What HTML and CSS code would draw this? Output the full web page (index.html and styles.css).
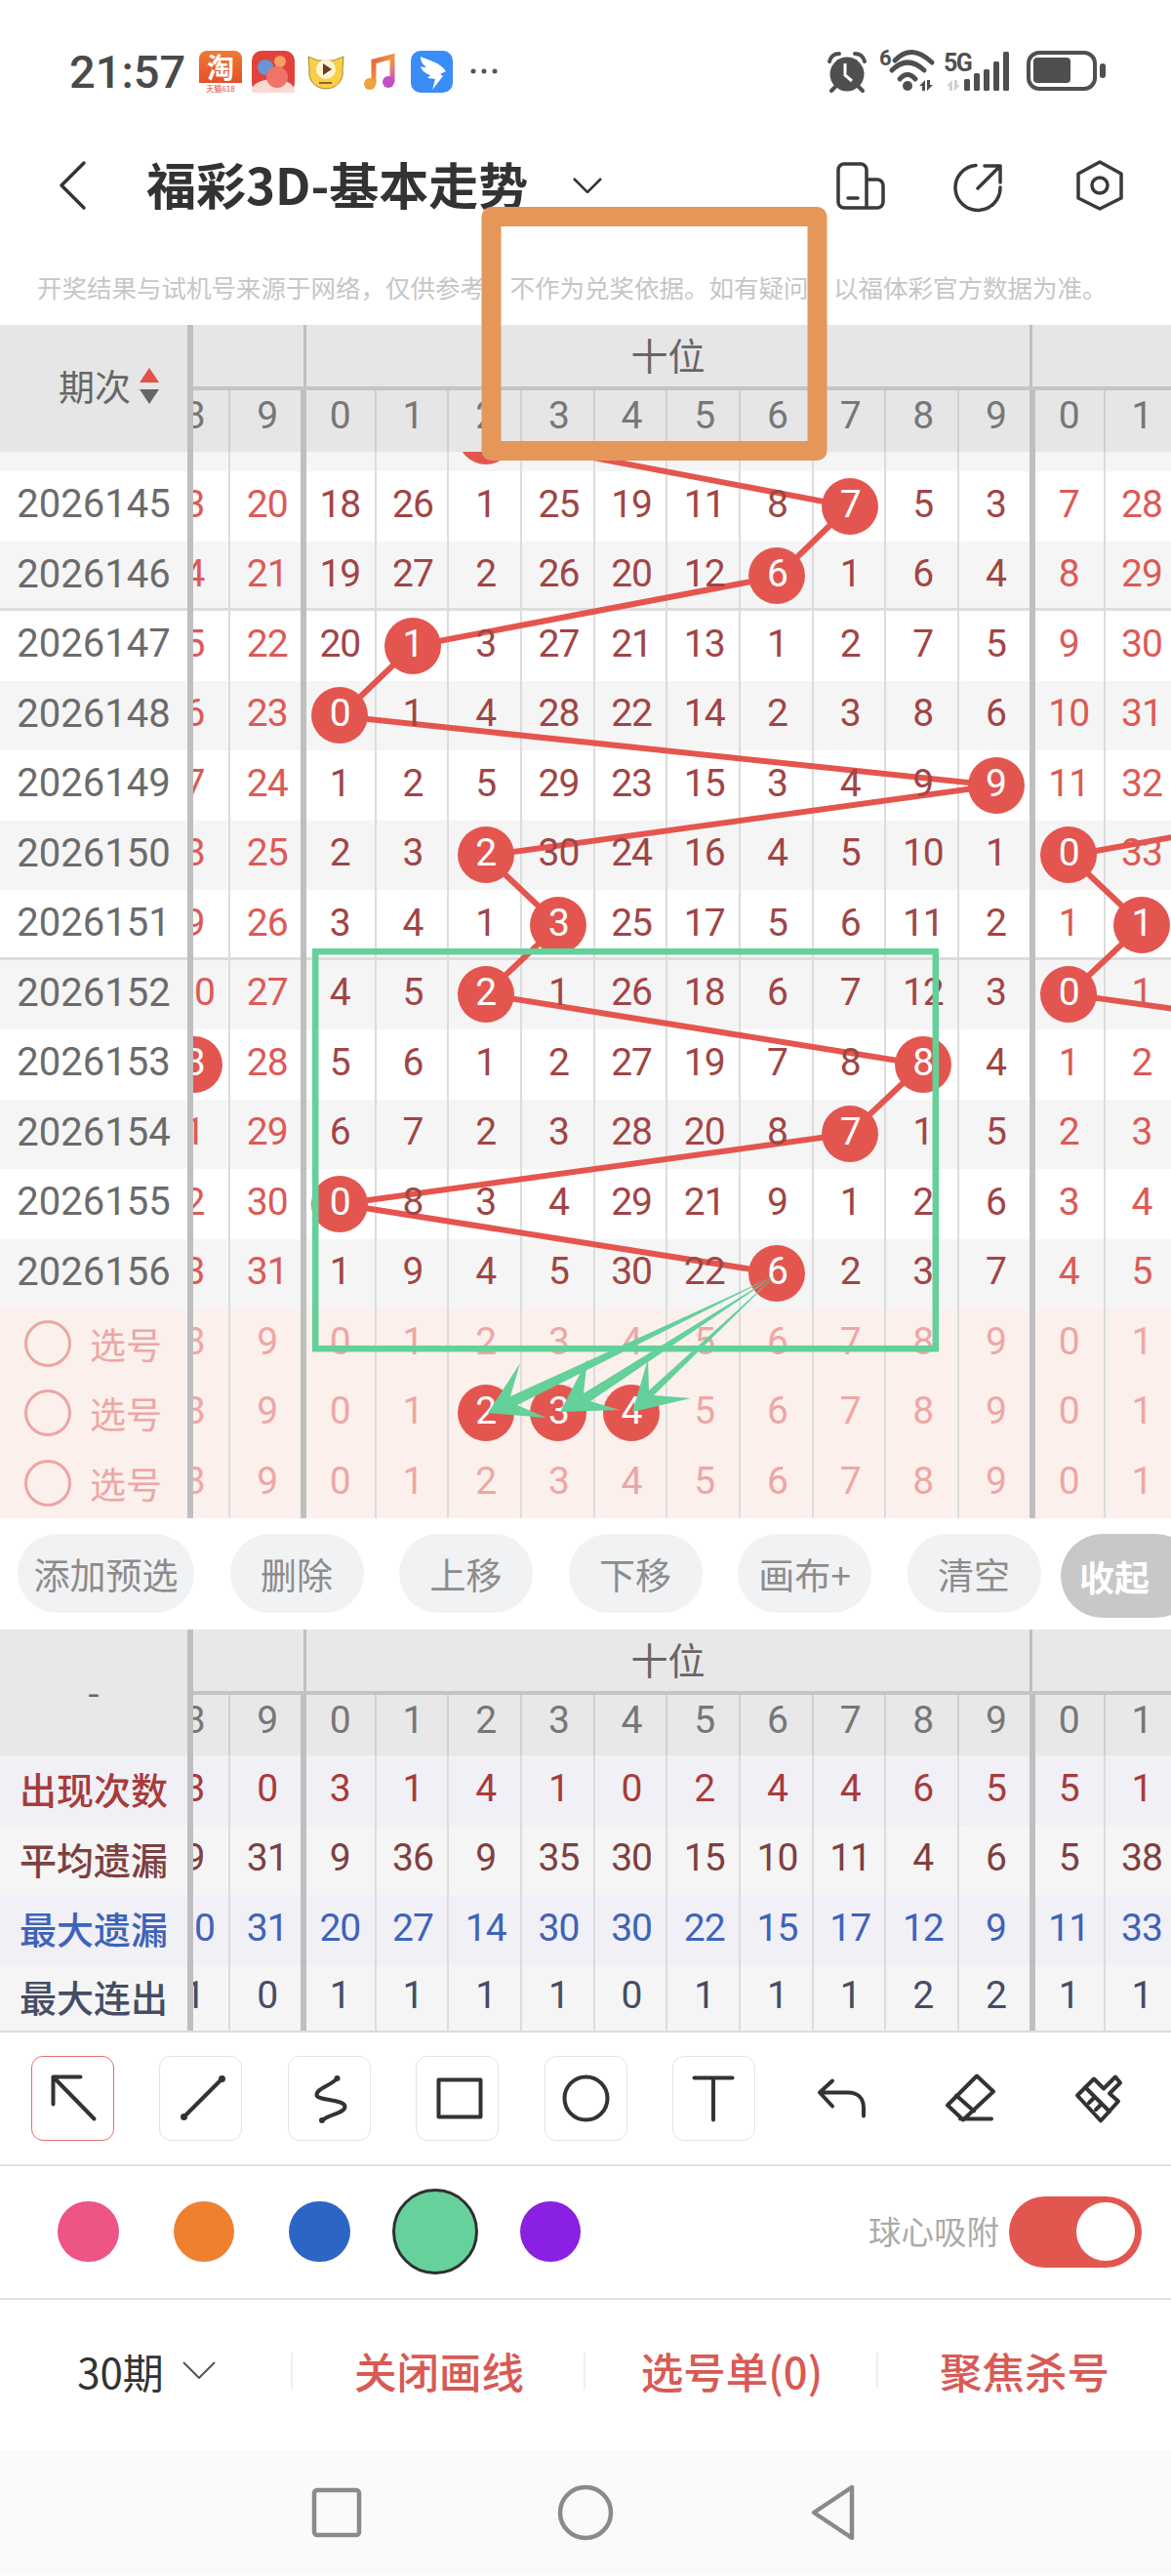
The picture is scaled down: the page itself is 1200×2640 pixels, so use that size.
FILE: index.html
```html
<!DOCTYPE html>
<html lang="zh-CN">
<head>
    <meta charset="UTF-8">
    <meta name="viewport" content="width=device-width, initial-scale=1.0">
    <title>福彩3D-基本走势</title>
    <link rel="stylesheet" href="styles.css">
</head>
<body>
<div class="page">

    <!-- status bar -->
    <div class="status-bar">
        <span class="clock">21:57</span>
        <svg class="app-icon" viewBox="0 0 54 44">
            <defs>
                <linearGradient id="tao" x1="0" y1="0" x2="0" y2="1">
                    <stop offset="0" stop-color="#ee7a33"/>
                    <stop offset="1" stop-color="#e5502a"/>
                </linearGradient>
            </defs>
            <path d="M5 34V9a8 8 0 0 1 8-8h28a8 8 0 0 1 8 8v25z" fill="url(#tao)"/>
            <text class="app-text tao-big" x="27" y="29" text-anchor="middle">淘</text>
            <text class="app-text tao-small" x="27" y="43" text-anchor="middle">天猫618</text>
        </svg>
        <svg class="app-icon" viewBox="0 0 54 44">
            <rect x="5" y="1" width="44" height="43" rx="10" fill="#e2423c"/>
            <ellipse cx="27" cy="42" rx="22" ry="12" fill="#fbdad6"/>
            <circle cx="19" cy="18" r="8" fill="#6a94d8"/>
            <circle cx="34" cy="12" r="6" fill="#f3a35e"/>
            <circle cx="31" cy="28" r="11" fill="#ef7468"/>
        </svg>
        <svg class="app-icon" viewBox="0 0 54 44">
            <path d="M9 7l10 4h16l10-4-1 13c2 12-7 20-17 20S8 32 10 20z" fill="#f7cf49" stroke="#a7873a" stroke-width="1"/>
            <circle cx="27" cy="20" r="10" fill="#fff6d0"/>
            <path d="M24 14l9 6-9 6z" fill="#6a3d22"/>
            <path d="M20 34h13" stroke="#8a6a2a" stroke-width="2"/>
        </svg>
        <svg class="app-icon" viewBox="0 0 54 44">
            <defs>
                <linearGradient id="note" x1="0" y1="0" x2="1" y2="1">
                    <stop offset="0" stop-color="#e8603f"/>
                    <stop offset=".55" stop-color="#ef9a3f"/>
                    <stop offset="1" stop-color="#c64fc4"/>
                </linearGradient>
            </defs>
            <path d="M22 35V12l19-5v26" fill="none" stroke="url(#note)" stroke-width="5"/>
            <circle cx="18" cy="35" r="6" fill="#f1a13e"/>
            <circle cx="37" cy="33" r="6" fill="#c64fc4"/>
        </svg>
        <svg class="app-icon" viewBox="0 0 54 44">
            <rect x="6" y="1" width="43" height="43" rx="10" fill="#3a8cf6"/>
            <path d="M16 7c9 4 20 6 26 15l-6 3 3 2-11 14 3-11-8-1 3-3c-6-2-9-5-10-9 2 1 4 1 6 1-4-3-6-6-6-11z" fill="#fff"/>
        </svg>
        <svg class="app-icon" viewBox="0 0 54 44">
            <circle cx="16" cy="22" r="2.5" fill="#555"/>
            <circle cx="27" cy="22" r="2.5" fill="#555"/>
            <circle cx="38" cy="22" r="2.5" fill="#555"/>
        </svg>

        <svg class="status-right" viewBox="845 45 290 56">
            <g fill="none" stroke="#4f4f4f" stroke-linecap="round">
                <path d="M850 63q2-8 10-8M886 63q-2-8-10-8" stroke-width="4"/>
                <path d="M856 89l-4 4M880 89l4 4" stroke-width="4"/>
                <path d="M917 62q17-18 38 2M914 72q16-16 33 0M922 81q8-9 16 0" stroke-width="5"/>
            </g>
            <circle cx="868" cy="76" r="17.5" fill="#4f4f4f"/>
            <path d="M866 65v12l7 6" fill="none" stroke="#fff" stroke-width="3"/>
            <text class="status-text" x="901" y="67">6</text>
            <circle cx="930" cy="88" r="5" fill="#4f4f4f"/>
            <path d="M942 88l6-6v11h-3v-5zM950 82h3v5h3l-6 6z" fill="#4f4f4f"/>
            <text class="status-text status-5g" x="967" y="73">5G</text>
            <path d="M970 88l6-6v11h-3v-5zM978 82h3v5h3l-6 6z" fill="#cfcfcf"/>
            <g fill="#4f4f4f">
                <rect x="988" y="81" width="6" height="12" rx="1.5"/>
                <rect x="998" y="75" width="6" height="18" rx="1.5"/>
                <rect x="1008" y="71" width="6" height="22" rx="1.5"/>
                <rect x="1018" y="63" width="6" height="30" rx="1.5"/>
                <rect x="1028" y="53" width="6" height="40" rx="1.5"/>
                <rect x="1059" y="59" width="38" height="26" rx="4"/>
                <rect x="1127" y="65" width="6" height="15" rx="3"/>
            </g>
            <rect x="1054" y="54" width="68" height="37" rx="11" fill="none" stroke="#4f4f4f" stroke-width="4"/>
        </svg>
    </div>

    <!-- title bar -->
    <div class="title-bar">
        <svg class="back" viewBox="0 0 32 52">
            <path d="M28 3L5 26l23 23" fill="none" stroke="#333" stroke-width="3.5" stroke-linecap="round" stroke-linejoin="round"/>
        </svg>
        <h1>福彩3D-基本走势</h1>
        <svg class="title-arrow" viewBox="0 0 32 16">
            <path d="M2 1l14 14L30 1" fill="none" stroke="#333" stroke-width="2.5"/>
        </svg>
        <div class="title-actions">
            <svg viewBox="0 0 56 56" class="action-icon">
                <path d="M11 6h17a6 6 0 0 1 6 6v39H11a6 6 0 0 1-6-6V12a6 6 0 0 1 6-6zM34 22h11a6 6 0 0 1 6 6v17a6 6 0 0 1-6 6H34M15 41h10"/>
            </svg>
            <svg viewBox="0 0 56 56" class="action-icon">
                <path d="M24 7.500A23 23 0 1 0 49 30M26 31L49 8M33 8h16v17"/>
            </svg>
            <svg viewBox="0 0 56 56" class="action-icon">
                <path d="M29 4l22 12v25L29 52 7 41V16z"/>
                <circle cx="29" cy="28" r="8"/>
            </svg>
        </div>
    </div>

    <p class="notice">开奖结果与试机号来源于网络，仅供参考，不作为兑奖依据。如有疑问，以福体彩官方数据为准。</p>

    <!-- trend table -->
    <div class="table-head">
        <div class="corner corner-sort">
            <span>期次</span>
            <span class="sort">
                <i class="sort-up"></i>
                <i class="sort-down"></i>
            </span>
        </div>
        <div class="head-scroll">
            <div class="head-inner">
                <div class="groups">
                    <div class="group g-hundreds"></div>
                    <div class="group g-tens">十位</div>
                    <div class="group g-ones"></div>
                </div>
                <div class="cells head-digits" data-line="8 9 0 1 2 3 4 5 6 7 8 9 0 1"></div>
            </div>
        </div>
    </div>

    <div class="table-body">
        <div class="frozen" id="frozen"></div>
        <div class="scroll">
            <div class="scroll-inner" id="rows">
                <!-- coordinates are page pixels, the viewBox lines them up with the rows -->
                <svg class="trend-lines" viewBox="161.600 463 1046 1093">
                    <polyline points="497,448 870,519 796,591 423,662 348,734 1020,805 497,877 572,948 497,1019 945,1091 870,1162 348,1234 796,1305"/>
                    <polyline points="1240,851 1095,877 1170,948 1095,1019 1240,1039"/>
                </svg>
            </div>
        </div>
    </div>

    <!-- action buttons -->
    <div class="actions">
        <button class="pill pill-wide">添加预选</button>
        <button class="pill">删除</button>
        <button class="pill">上移</button>
        <button class="pill">下移</button>
        <button class="pill">画布+</button>
        <button class="pill">清空</button>
        <button class="pill pill-fold">收起</button>
    </div>

    <!-- stats table -->
    <div class="table-head stats-head">
        <div class="corner">-</div>
        <div class="head-scroll">
            <div class="head-inner">
                <div class="groups">
                    <div class="group g-hundreds"></div>
                    <div class="group g-tens">十位</div>
                    <div class="group g-ones"></div>
                </div>
                <div class="cells head-digits" data-line="8 9 0 1 2 3 4 5 6 7 8 9 0 1"></div>
            </div>
        </div>
    </div>
    <div class="stats-body">
        <div class="frozen" id="stats-frozen"></div>
        <div class="scroll">
            <div class="scroll-inner stats-inner" id="stats-rows"></div>
        </div>
    </div>

    <!-- drawing tools -->
    <div class="tools">
        <button class="tool tool-on">
            <svg viewBox="0 0 60 60"><path d="M37.500 8.500h-28v28M9.500 8.500l42 43"/></svg>
        </button>
        <button class="tool">
            <svg viewBox="0 0 60 60"><path d="M51.500 10.500l-39 39"/><circle class="dot" cx="51.500" cy="10.500" r="3.500"/><circle class="dot" cx="12.500" cy="49.500" r="3.500"/></svg>
        </button>
        <button class="tool">
            <svg viewBox="0 0 60 60"><path d="M38.500 10c-7 8-21 10-21 17 0 6 29 4 29 12 0 7-18 8-23 14"/><circle class="dot" cx="38.500" cy="10" r="3"/><circle class="dot" cx="23" cy="53" r="3"/></svg>
        </button>
        <button class="tool">
            <svg viewBox="0 0 60 60"><rect x="10.500" y="11.500" width="43" height="38"/></svg>
        </button>
        <button class="tool">
            <svg viewBox="0 0 60 60"><circle cx="30.500" cy="30.500" r="22"/></svg>
        </button>
        <button class="tool">
            <svg viewBox="0 0 60 60"><path d="M10.500 9.500h39M30 9.500v43"/></svg>
        </button>
        <div class="tool-plain">
            <svg viewBox="0 0 60 60"><path d="M21 12.500L8 24.500l13 14M8 24.500h29c10 0 16 6 16 16v8"/></svg>
            <svg viewBox="0 0 60 60"><path d="M37 7.500l17 16-31 29-16-15zM16 27.500l18 16M20 51.500h32"/></svg>
            <svg viewBox="0 0 60 60"><path d="M25 10.500l10 10 12-12 5 6-11 11 9 8-18 20L8 27.500zM16 19l25 25M20 35l6-6M27 42l6-6"/></svg>
        </div>
    </div>

    <!-- colours -->
    <div class="colors">
        <span class="swatch swatch-pink"></span>
        <span class="swatch swatch-orange"></span>
        <span class="swatch swatch-blue"></span>
        <span class="swatch swatch-green swatch-on"></span>
        <span class="swatch swatch-purple"></span>
        <span class="snap-label">球心吸附</span>
        <span class="switch"><i></i></span>
    </div>

    <!-- bottom bar -->
    <div class="bottom-bar">
        <div class="bottom-item period">
            <span>30期</span>
            <svg viewBox="0 0 34 18" class="period-arrow"><path d="M1 1l16 16L33 1" fill="none" stroke="#555" stroke-width="2"/></svg>
        </div>
        <div class="bottom-item">关闭画线</div>
        <div class="bottom-item">选号单(0)</div>
        <div class="bottom-item">聚焦杀号</div>
    </div>

    <!-- android nav -->
    <div class="nav-bar">
        <svg viewBox="0 0 60 60"><rect x="7" y="7" width="46" height="46" rx="3"/></svg>
        <svg viewBox="0 0 60 60"><circle cx="30" cy="30" r="26"/></svg>
        <svg viewBox="0 0 60 60"><path d="M48 4v52L9 30z"/></svg>
    </div>

    <!-- hand drawn marks on top of the page -->
    <svg class="draw-layer" viewBox="0 0 1200 2640">
        <rect class="mark-orange" x="503.500" y="222" width="334" height="240"/>
        <rect class="mark-green" x="323.200" y="975.200" width="635.600" height="407"/>
        <polygon class="mark-arrow" points="795,1307 523,1431 533,1397 500,1448 560,1453 530,1440"/>
        <polygon class="mark-arrow" points="795,1307 598,1428 602,1393 574,1447 635,1445 605,1436"/>
        <polygon class="mark-arrow" points="795,1307 665,1425 664,1393 648,1447 708,1433 670,1430"/>
    </svg>
</div>

<script>
    // '*' marks a drawn ball, '.' an empty cell
    const ROWS = [
        { period: '', cls: 'even', line: '. . . . *2 . . . . . . . . .' },
        { period: '2026145', cls: '', line: '3 20 18 26 1 25 19 11 8 *7 5 3 7 28' },
        { period: '2026146', cls: 'even sep', line: '4 21 19 27 2 26 20 12 *6 1 6 4 8 29' },
        { period: '2026147', cls: '', line: '5 22 20 *1 3 27 21 13 1 2 7 5 9 30' },
        { period: '2026148', cls: 'even', line: '6 23 *0 1 4 28 22 14 2 3 8 6 10 31' },
        { period: '2026149', cls: '', line: '7 24 1 2 5 29 23 15 3 4 9 *9 11 32' },
        { period: '2026150', cls: 'even', line: '8 25 2 3 *2 30 24 16 4 5 10 1 *0 33' },
        { period: '2026151', cls: 'sep', line: '9 26 3 4 1 *3 25 17 5 6 11 2 1 *1' },
        { period: '2026152', cls: 'even', line: '10 27 4 5 *2 1 26 18 6 7 12 3 *0 1' },
        { period: '2026153', cls: '', line: '*8 28 5 6 1 2 27 19 7 8 *8 4 1 2' },
        { period: '2026154', cls: 'even', line: '1 29 6 7 2 3 28 20 8 *7 1 5 2 3' },
        { period: '2026155', cls: '', line: '2 30 *0 8 3 4 29 21 9 1 2 6 3 4' },
        { period: '2026156', cls: 'even', line: '3 31 1 9 4 5 30 22 *6 2 3 7 4 5' },
        { pick: true, cls: 'pick', line: '8 9 0 1 2 3 4 5 6 7 8 9 0 1' },
        { pick: true, cls: 'pick', line: '8 9 0 1 *2 *3 *4 5 6 7 8 9 0 1' },
        { pick: true, cls: 'pick', line: '8 9 0 1 2 3 4 5 6 7 8 9 0 1' }
    ];

    const STATS = [
        { label: '出现次数', cls: 'stat-count', line: '3 0 3 1 4 1 0 2 4 4 6 5 5 1' },
        { label: '平均遗漏', cls: 'stat-avg', line: '9 31 9 36 9 35 30 15 10 11 4 6 5 38' },
        { label: '最大遗漏', cls: 'stat-max', line: '10 31 20 27 14 30 30 22 15 17 12 9 11 33' },
        { label: '最大连出', cls: 'stat-run', line: '1 0 1 1 1 1 0 1 1 1 2 2 1 1' }
    ];

    function cellsHtml(line) {
        return line.split(' ').map(v => {
            if (v === '.') return '<div class="cell"></div>';
            if (v[0] === '*') return `<div class="cell"><span class="ball">${v.slice(1)}</span></div>`;
            return `<div class="cell"><span class="num">${v}</span></div>`;
        }).join('');
    }

    function addRows(list, frozenId, rowsId) {
        const frozen = document.getElementById(frozenId);
        const rows = document.getElementById(rowsId);
        list.forEach(row => {
            const left = document.createElement('div');
            left.className = `row side ${row.cls}`;
            if (row.pick) {
                left.innerHTML = '<span class="ring"></span><span>选号</span>';
            } else {
                left.textContent = row.period || row.label;
            }
            frozen.appendChild(left);

            const right = document.createElement('div');
            right.className = `row cells ${row.cls}`;
            right.innerHTML = cellsHtml(row.line);
            rows.appendChild(right);
        });
    }

    document.querySelectorAll('.head-digits').forEach(el => {
        el.innerHTML = cellsHtml(el.dataset.line);
    });
    addRows(ROWS, 'frozen', 'rows');
    addRows(STATS, 'stats-frozen', 'stats-rows');
</script>
</body>
</html>
```

FILE: styles.css
```css
* {
    box-sizing: border-box;
}

body {
    margin: 0;
    background-color: #fff;
    font-family: "Noto Sans CJK SC", "Noto Sans", sans-serif;
    color: #333;
}

.page {
    position: relative;
    width: 1200px;
    height: 2640px;
    overflow: hidden;
}

/* status bar */
.status-bar {
    display: flex;
    align-items: center;
    height: 146px;
    padding-left: 71px;
}

.clock {
    width: 128px;
    font-family: Roboto, sans-serif;
    font-weight: 500;
    font-size: 47px;
    color: #4a4a4a;
}

.app-icon {
    width: 54px;
    height: 44px;
    flex: none;
}

.app-text {
    font-family: "Noto Sans CJK SC", sans-serif;
}

.tao-big {
    font-size: 28px;
    font-weight: 700;
    fill: #fff;
}

.tao-small {
    font-size: 8px;
    fill: #d9472b;
}

.status-right {
    width: 290px;
    height: 56px;
    margin-left: auto;
    margin-right: 65px;
}

.status-text {
    font-family: Roboto, sans-serif;
    font-weight: 700;
    font-size: 22px;
    fill: #4f4f4f;
}

.status-5g {
    font-size: 25px;
    letter-spacing: -1.5px;
}

/* title bar */
.title-bar {
    display: flex;
    align-items: center;
    height: 88px;
    padding-left: 58px;
}

.back {
    width: 32px;
    height: 52px;
}

h1 {
    margin: 0 0 0 60px;
    padding-bottom: 4px;
    font-size: 51px;
    font-weight: 700;
    line-height: 1;
    color: #333;
}

.title-arrow {
    width: 32px;
    height: 16px;
    margin-left: 45px;
}

.title-actions {
    display: flex;
    gap: 66px;
    margin-left: auto;
    padding-right: 46px;
}

.action-icon {
    width: 56px;
    height: 56px;
    fill: none;
    stroke: #3a3a3a;
    stroke-width: 3.5;
    stroke-linecap: round;
    stroke-linejoin: round;
}

.notice {
    display: flex;
    align-items: center;
    height: 99px;
    margin: 0;
    padding: 19px 0 0 38px;
    font-size: 25.500px;
    color: #c6c6c6;
    white-space: nowrap;
}

/* tables */
.table-head {
    display: flex;
    height: 130px;
    background-color: #e6e6e6;
}

.corner {
    display: flex;
    align-items: center;
    justify-content: center;
    flex: none;
    width: 198px;
    padding-bottom: 6px;
    border-right: 6px solid #bfbfbf;
    font-size: 37px;
    color: #666;
}

.corner-sort {
    gap: 9px;
    justify-content: flex-start;
    padding-left: 60px;
}

.sort {
    display: flex;
    flex-direction: column;
    gap: 7px;
}

.sort-up {
    border-left: 10px solid transparent;
    border-right: 10px solid transparent;
    border-bottom: 15px solid #e2504a;
}

.sort-down {
    border-left: 10px solid transparent;
    border-right: 10px solid transparent;
    border-top: 15px solid #666;
}

.head-scroll {
    flex: 1;
    overflow: hidden;
}

.head-inner {
    width: 1046px;
    margin-left: -36.400px;
}

.groups {
    display: grid;
    grid-template-columns: 149.400px 747px 149.400px;
    height: 67px;
    border-bottom: 4px solid #c4c4c4;
}

.group {
    display: flex;
    align-items: center;
    justify-content: center;
    padding-bottom: 5px;
    font-size: 38px;
    color: #666;
}

.g-tens {
    box-shadow: inset 3px 0 #bfbfbf, inset -3px 0 #bfbfbf;
}

.cells {
    display: grid;
    grid-template-columns: repeat(14, 74.700px);
}

.cell {
    display: flex;
    align-items: center;
    justify-content: center;
    box-shadow: inset -2px 0 #dcdcdc;
    font-family: Roboto, sans-serif;
    font-size: 39px;
    letter-spacing: -1px;
    color: #a04545;
}

.cell:nth-child(2),
.cell:nth-child(12) {
    box-shadow: inset -3px 0 #bfbfbf;
}

.cell:nth-child(3),
.cell:nth-child(13) {
    box-shadow: inset 3px 0 #bfbfbf, inset -2px 0 #dcdcdc;
}

.cell:nth-child(-n+2),
.cell:nth-child(n+13) {
    color: #dc5a56;
}

.head-digits {
    height: 63px;
}

.head-digits .cell {
    padding-bottom: 8px;
    color: #777;
    box-shadow: inset -2px 0 #cfcfcf;
}

.head-digits .cell:nth-child(2),
.head-digits .cell:nth-child(12) {
    box-shadow: inset -3px 0 #bfbfbf;
}

.head-digits .cell:nth-child(3),
.head-digits .cell:nth-child(13) {
    box-shadow: inset 3px 0 #bfbfbf, inset -2px 0 #cfcfcf;
}

.table-body {
    display: flex;
    height: 1093px;
    overflow: hidden;
}

.frozen {
    flex: none;
    width: 198px;
    margin-top: -51.500px;
    border-right: 6px solid #bfbfbf;
}

.scroll {
    flex: 1;
    overflow: hidden;
}

.scroll-inner {
    position: relative;
    width: 1046px;
    margin-top: -51.500px;
    margin-left: -36.400px;
}

.row {
    height: 71.500px;
}

.row.even {
    background-color: #f5f5f5;
}

.row.sep {
    box-shadow: inset 0 -3px #dddddd;
}

.row.pick {
    background-color: #fbf0ec;
}

.row.pick .cell {
    color: #eda7a5;
}

.side {
    display: flex;
    align-items: center;
    justify-content: center;
    padding-bottom: 4px;
    font-family: Roboto, sans-serif;
    font-size: 40px;
    color: #6b6b6b;
}

.side.pick {
    gap: 19px;
    justify-content: flex-start;
    padding-bottom: 0;
    padding-left: 25px;
    font-family: "Noto Sans CJK SC", sans-serif;
    font-size: 37px;
    color: #eda7a5;
}

.ring {
    width: 48px;
    height: 48px;
    border: 3px solid #eba6a5;
    border-radius: 50%;
}

.trend-lines {
    position: absolute;
    top: 0;
    left: 0;
    z-index: 1;
    width: 1046px;
    height: 1093px;
    margin-top: 51.500px;
    overflow: visible;
    fill: none;
    stroke: #e5554f;
    stroke-width: 6;
}

.num {
    position: relative;
    z-index: 2;
    padding-bottom: 4px;
}

.ball {
    position: relative;
    z-index: 3;
    display: flex;
    align-items: center;
    justify-content: center;
    width: 58px;
    height: 58px;
    padding-bottom: 4px;
    border-radius: 50%;
    background-color: #e35650;
    color: #fff;
}

/* action buttons */
.actions {
    display: flex;
    align-items: flex-start;
    gap: 36.500px;
    height: 114px;
    padding: 16px 0 0 18px;
    background-color: #fff;
}

.pill {
    flex: none;
    width: 137px;
    height: 81px;
    padding: 0;
    border: none;
    border-radius: 41px;
    background-color: #f1f2f4;
    font-family: "Noto Sans CJK SC", sans-serif;
    font-size: 37px;
    color: #8c8c8c;
}

.pill-wide {
    width: 181px;
}

.pill-fold {
    width: 140px;
    height: 86px;
    margin-left: -16px;
    padding-left: 19px;
    border-radius: 43px;
    background-color: #c8c8c8;
    font-size: 36px;
    font-weight: 700;
    text-align: left;
    color: #fff;
}

/* stats table */
.stats-head {
    height: 129px;
    background-color: #e8e8e8;
}

.stats-body {
    display: flex;
    overflow: hidden;
    border-bottom: 2px solid #dcdcdc;
}

.stats-body .frozen {
    margin-top: 0;
}

.stats-inner {
    margin-top: 0;
}

.stat-count,
.stat-avg,
.stat-max,
.stat-run {
    font-family: "Noto Sans CJK SC", sans-serif;
    font-size: 38px;
    font-weight: 500;
}

.stat-count {
    background-color: #f0f0f6;
    color: #a83b3b;
}

.stat-avg {
    background-color: #f5f5f5;
    color: #7e4040;
}

.stat-max {
    background-color: #f0f0f6;
    color: #3f63b8;
}

.stat-run {
    height: 67px;
    background-color: #f5f5f5;
    color: #454d66;
}

.stats-inner .cell {
    color: inherit;
    font-family: Roboto, sans-serif;
    font-size: 39px;
    font-weight: 400;
}

/* tools */
.tools {
    display: flex;
    align-items: center;
    gap: 46.400px;
    height: 137px;
    padding: 0 0 0 32px;
    border-bottom: 2px solid #e0e0e0;
}

.tool {
    display: flex;
    align-items: center;
    justify-content: center;
    flex: none;
    width: 85px;
    height: 87px;
    padding: 0;
    border: 1.500px solid #e2e2e2;
    border-radius: 12px;
    background-color: #fff;
}

.tool-on {
    border-color: #e0706c;
}

.tool svg,
.tool-plain svg {
    width: 60px;
    height: 60px;
    fill: none;
    stroke: #333;
    stroke-width: 4;
    stroke-linecap: round;
    stroke-linejoin: round;
}

.tool .dot {
    fill: #333;
    stroke: none;
}

.tool-plain {
    display: flex;
    gap: 72px;
    margin-left: 12px;
}

/* colours */
.colors {
    display: flex;
    align-items: center;
    gap: 56px;
    height: 137px;
    padding-left: 59px;
    border-bottom: 2px solid #e0e0e0;
}

.swatch {
    flex: none;
    width: 62.500px;
    height: 62.500px;
    border-radius: 50%;
}

.swatch-pink {
    background-color: #ec5584;
}

.swatch-orange {
    background-color: #ee8030;
}

.swatch-blue {
    background-color: #2c65c4;
}

.swatch-green {
    background-color: #66d19b;
}

.swatch-purple {
    background-color: #8a20e2;
}

.swatch-on {
    width: 88px;
    height: 88px;
    margin: 0 -13px;
    border: 3px solid #2f2f2f;
}

.snap-label {
    margin-left: auto;
    margin-right: -46px;
    padding-bottom: 3px;
    font-size: 33.500px;
    color: #ababab;
}

.switch {
    display: flex;
    align-items: center;
    justify-content: flex-end;
    flex: none;
    width: 136px;
    height: 73px;
    margin-right: 30px;
    padding-right: 7px;
    border-radius: 37px;
    background-color: #e35650;
}

.switch i {
    width: 60px;
    height: 60px;
    border-radius: 50%;
    background-color: #fff;
}

/* bottom bar */
.bottom-bar {
    display: grid;
    grid-template-columns: repeat(4, 300px);
    align-items: center;
    height: 154px;
    padding-bottom: 9px;
}

.bottom-item {
    display: flex;
    align-items: center;
    justify-content: center;
    height: 37px;
    font-size: 43.500px;
    font-weight: 500;
    color: #d85a55;
    box-shadow: -2px 0 #eeeeee;
}

.period {
    gap: 19px;
    font-size: 42px;
    font-weight: 400;
    color: #333;
    box-shadow: none;
}

.period-arrow {
    width: 34px;
    height: 18px;
}

/* android nav */
.nav-bar {
    display: flex;
    align-items: center;
    justify-content: center;
    gap: 195px;
    height: 128px;
    background-color: #fafafa;
}

.nav-bar svg {
    width: 60px;
    height: 60px;
    fill: none;
    stroke: #8a8a8a;
    stroke-width: 4.500;
    stroke-linejoin: round;
}

/* marks drawn by the user */
.draw-layer {
    position: absolute;
    top: 0;
    left: 0;
    z-index: 5;
    width: 1200px;
    height: 2640px;
    pointer-events: none;
}

.mark-orange {
    fill: none;
    stroke: #e59659;
    stroke-width: 20;
    stroke-linejoin: round;
}

.mark-green {
    fill: none;
    stroke: #64d09a;
    stroke-width: 6.500;
}

.mark-arrow {
    fill: #64d09a;
}
```
